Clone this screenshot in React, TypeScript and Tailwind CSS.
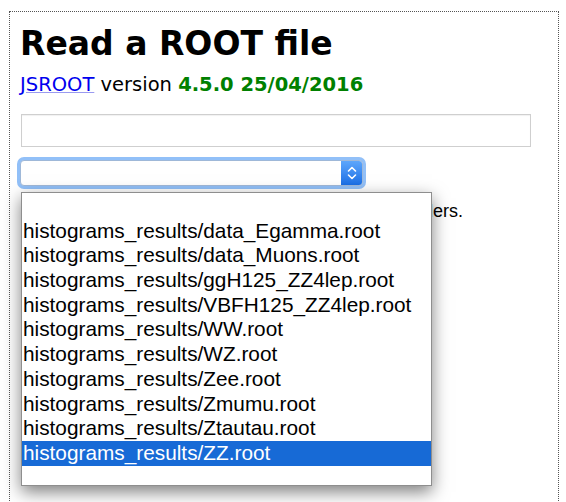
import React from 'react'

const files: string[] = [
  '',
  'histograms_results/data_Egamma.root',
  'histograms_results/data_Muons.root',
  'histograms_results/ggH125_ZZ4lep.root',
  'histograms_results/VBFH125_ZZ4lep.root',
  'histograms_results/WW.root',
  'histograms_results/WZ.root',
  'histograms_results/Zee.root',
  'histograms_results/Zmumu.root',
  'histograms_results/Ztautau.root',
  'histograms_results/ZZ.root',
]

const selected = 'histograms_results/ZZ.root'

const SelectArrows = () => (
  <svg width="10" height="16" viewBox="0 0 10 16" fill="none">
    <path d="M1.5 6 L5 2.5 L8.5 6" stroke="white" strokeWidth="1.6" strokeLinecap="round" strokeLinejoin="round" />
    <path d="M1.5 10 L5 13.5 L8.5 10" stroke="white" strokeWidth="1.6" strokeLinecap="round" strokeLinejoin="round" />
  </svg>
)

export default function App() {
  return (
    <div className="relative h-[502px] w-[566px] overflow-hidden bg-white">
      <div className="ml-[9px] mt-[11px] h-[520px] w-[550px] border border-dotted border-[#555] pl-[11px] font-['DejaVu_Sans',Verdana,sans-serif]">
        <h1 className="-ml-[1px] mt-[13px] text-[33px] font-bold leading-[38px] text-black">Read a ROOT file</h1>
        <p className="-ml-[1px] mt-[10px] text-[19.5px] leading-[24px] text-black">
          <a href="#" className="text-[#0000ee] underline decoration-[#9a9af0]">
            JSROOT
          </a>{' '}
          version <span className="font-bold text-[#008000]">4.5.0 25/04/2016</span>
        </p>
        <div className="mt-[17px] h-[33px] w-[510px] border border-[#cfcfcf] bg-white shadow-[inset_0_1px_1px_rgba(0,0,0,0.06)]" />
        <div className="mt-[13px] flex h-[26px] w-[343px] -translate-x-[1px] items-stretch overflow-hidden rounded-[4px] border border-[#9fb8d8] bg-white shadow-[0_0_0_3px_#92c0f8]">
          <div className="flex-1" />
          <div className="flex w-[21px] items-center justify-center bg-gradient-to-b from-[#5da6fb] to-[#1a6fe6]">
            <SelectArrows />
          </div>
        </div>
        <p className="mt-[14px] w-[442px] whitespace-nowrap text-right font-['Liberation_Sans',Helvetica,Arial,sans-serif] text-[18px] leading-[22px] text-black">
          Select a file to read its histograms and folders.
        </p>
      </div>

      <div className="absolute left-[21px] top-[192px] h-[294px] w-[411px] border border-[#8e8e8e] bg-white pt-[1px] shadow-[0_6px_16px_rgba(0,0,0,0.5)] font-['Liberation_Sans',Helvetica,Arial,sans-serif]">
        {files.map((f, i) => (
          <div
            key={i}
            className={
              f === selected
                ? 'h-[24.7px] whitespace-nowrap bg-[#176ad6] pl-[1px] text-[20.8px] leading-[24.7px] text-white'
                : 'h-[24.7px] whitespace-nowrap pl-[1px] text-[20.8px] leading-[24.7px] text-black'
            }
          >
            {f}
          </div>
        ))}
      </div>
    </div>
  )
}
